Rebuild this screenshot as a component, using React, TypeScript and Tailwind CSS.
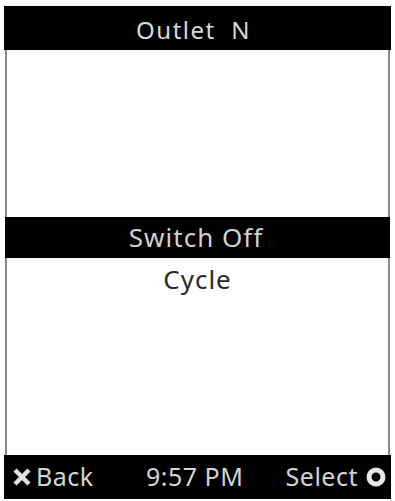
export default function App() {
  return (
    <div className="w-[395px] h-[501px] bg-white pt-[6px] pl-[4px]" style={{ fontFamily: '"Noto Sans", "DejaVu Sans", sans-serif' }}>
      <div className="w-[387px] h-[493px] flex flex-col">
        <div className="h-[44px] bg-black flex items-center justify-center pt-[3px] pr-[8px] text-[#d9d9d9] text-[24px] tracking-[1.5px] whitespace-pre">
          Outlet  N
        </div>
        <div className="flex-1 flex flex-col border-x-2 border-[#8a8a8a] mx-[1px] bg-white">
          <div className="h-[167px]" />
          <div className="h-[41px] bg-black -mx-[2px] flex items-center justify-center pr-[3px] text-[#d0d0d0] text-[26px] tracking-[1px]">
            Switch Off
          </div>
          <div className="h-[42px] flex items-center justify-center text-[#2a2a2a] text-[26px] tracking-[1px]">
            Cycle
          </div>
          <div className="flex-1" />
        </div>
        <div className="h-[44px] bg-black flex items-center justify-between pl-[9px] pr-[5px] text-[#d4d4d4] text-[25px] tracking-[0.5px]">
          <div className="flex items-center gap-[5px]">
            <svg width="18" height="18" viewBox="0 0 18 18">
              <path d="M2 2 L16 16 M16 2 L2 16" stroke="#e0e0e0" strokeWidth="4.5" strokeLinecap="butt" />
            </svg>
            <span>Back</span>
          </div>
          <span className="ml-[10px]">9:57 PM</span>
          <div className="flex items-center gap-[8px]">
            <span>Select</span>
            <svg width="20" height="20" viewBox="0 0 20 20">
              <circle cx="10" cy="10" r="7" fill="none" stroke="#e8e8e8" strokeWidth="5" />
            </svg>
          </div>
        </div>
      </div>
    </div>
  );
}
